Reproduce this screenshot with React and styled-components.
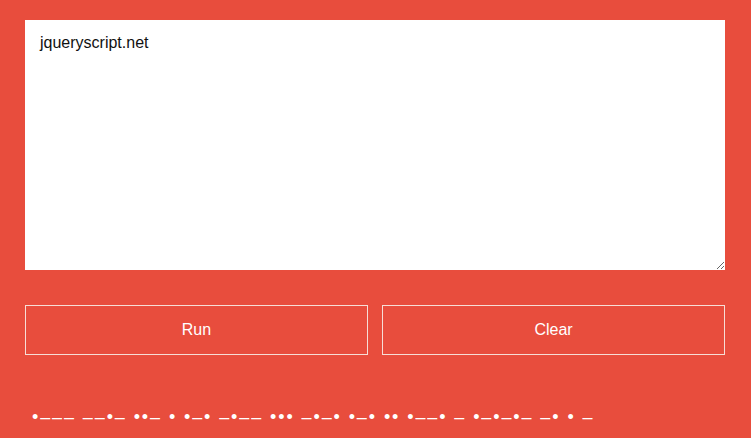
import React, { useState } from 'react';
import styled, { createGlobalStyle } from 'styled-components';

const toMorse = {
  a: '.-', b: '-...', c: '-.-.', d: '-..', e: '.', f: '..-.', g: '--.', h: '....',
  i: '..', j: '.---', k: '-.-', l: '.-..', m: '--', n: '-.', o: '---', p: '.--.',
  q: '--.-', r: '.-.', s: '...', t: '-', u: '..-', v: '...-', w: '.--', x: '-..-',
  y: '-.--', z: '--..', '.': '.-.-.-'
};

const encode = (text) =>
  text
    .toLowerCase()
    .split('')
    .map((ch) => toMorse[ch] || '')
    .filter(Boolean)
    .join(' ')
    .replace(/\./g, '•')
    .replace(/-/g, '–');

const GlobalStyle = createGlobalStyle`
  html, body {
    margin: 0;
    padding: 0;
    background: #e84d3d;
  }
  body {
    font-family: "Liberation Sans", Arial, sans-serif;
  }
`;

const Page = styled.div`
  width: 751px;
  height: 438px;
  padding: 20px 25px 0 25px;
  box-sizing: border-box;
  display: flex;
  flex-direction: column;
`;

const Input = styled.textarea`
  width: 700px;
  height: 250px;
  box-sizing: border-box;
  border: none;
  outline: none;
  margin: 0;
  padding: 14px 15px;
  background: #fff;
  color: #111;
  font-family: "Liberation Sans", Arial, sans-serif;
  font-size: 16px;
  line-height: 18px;
  resize: both;
  display: block;
`;

const Buttons = styled.div`
  display: grid;
  grid-template-columns: 1fr 1fr;
  column-gap: 14px;
  margin-top: 35px;
  width: 700px;
`;

const Button = styled.button`
  height: 50px;
  background: transparent;
  border: 1px solid #f7ded6;
  color: #fff;
  font-family: "Liberation Sans", Arial, sans-serif;
  font-size: 16px;
  cursor: pointer;
  padding: 0;
`;

const Output = styled.div`
  margin-top: 52px;
  padding-left: 7px;
  color: #fff;
  font-family: "Liberation Sans", Arial, sans-serif;
  font-size: 18px;
  letter-spacing: 1.9px;
  line-height: 20px;
  white-space: pre;
`;

export default function App() {
  const [text, setText] = useState('jqueryscript.net');
  const [morse, setMorse] = useState(encode('jqueryscript.net'));

  return (
    <>
      <GlobalStyle />
      <Page>
        <Input value={text} onChange={(e) => setText(e.target.value)} spellCheck />
        <Buttons>
          <Button onClick={() => setMorse(encode(text))}>Run</Button>
          <Button onClick={() => { setText(''); setMorse(''); }}>Clear</Button>
        </Buttons>
        <Output>{morse}</Output>
      </Page>
    </>
  );
}
